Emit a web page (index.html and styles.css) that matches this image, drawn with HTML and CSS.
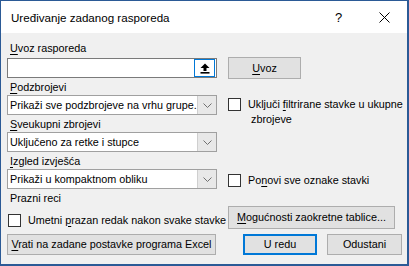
FILE: index.html
```html
<!DOCTYPE html>
<html lang="hr">
<head>
<meta charset="utf-8">
<title>Uređivanje zadanog rasporeda</title>
<link rel="stylesheet" href="styles.css">
</head>
<body>
<div class="window">
  <div class="titlebar">
    <span class="title">Uređivanje zadanog rasporeda</span>
    <span class="help">?</span>
    <svg class="close" width="11" height="11" viewBox="0 0 11 11"><path d="M0.5 0.5 L10.5 10.5 M10.5 0.5 L0.5 10.5" stroke="#000" stroke-width="1" fill="none"/></svg>
  </div>
  <div class="content">
    <div class="label"><u>U</u>voz rasporeda</div>
    <div class="import-row">
      <div class="input">
        <span class="upload">
          <svg width="10" height="11" viewBox="0 0 10 11"><path d="M5 0.5 L9.5 5 L6.5 5 L6.5 8 L3.5 8 L3.5 5 L0.5 5 Z" fill="#000"/><rect x="0.5" y="9" width="9" height="1.6" fill="#000"/></svg>
        </span>
      </div>
      <button class="btn btn-import"><u>U</u>voz</button>
    </div>
    <div class="grid">
      <div class="label"><u>P</u>odzbrojevi</div>
      <div class="combo c1"><span class="value">Prikaži sve podzbrojeve na vrhu grupe.</span><span class="arrow"><svg width="9" height="5" viewBox="0 0 9 5"><path d="M0.5 0.5 L4.5 4.5 L8.5 0.5" stroke="#707070" fill="none"/></svg></span></div>
      <div class="check check1"><span class="box"></span><span class="ctext">Uključi <u>f</u>iltrirane stavke u ukupne<br><span class="indent">zbrojeve</span></span></div>
      <div class="label l2"><u>S</u>veukupni zbrojevi</div>
      <div class="combo c2"><span class="value">Uključeno za retke i stupce</span><span class="arrow"><svg width="9" height="5" viewBox="0 0 9 5"><path d="M0.5 0.5 L4.5 4.5 L8.5 0.5" stroke="#707070" fill="none"/></svg></span></div>
      <div class="label l3"><u>I</u>zgled izvješća</div>
      <div class="combo c3"><span class="value">Prikaži u kompaktnom obliku</span><span class="arrow"><svg width="9" height="5" viewBox="0 0 9 5"><path d="M0.5 0.5 L4.5 4.5 L8.5 0.5" stroke="#707070" fill="none"/></svg></span></div>
      <div class="check check2"><span class="box"></span><span class="ctext">Po<u>n</u>ovi sve oznake stavki</span></div>
      <div class="label l4">Prazni reci</div>
      <div class="check check3"><span class="box"></span><span class="ctext">Umetni <u>p</u>razan redak nakon svake stavke</span></div>
      <button class="btn btn-options"><u>M</u>ogućnosti zaokretne tablice...</button>
      <button class="btn btn-reset"><u>V</u>rati na zadane postavke programa Excel</button>
      <div class="actions">
        <button class="btn btn-ok">U redu</button>
        <button class="btn btn-cancel">Odustani</button>
      </div>
    </div>
  </div>
</div>
</body>
</html>
```
FILE: styles.css
```css
* { box-sizing: border-box; }
html, body { margin: 0; padding: 0; }
body {
  width: 409px;
  height: 266px;
  overflow: hidden;
  font-family: "Liberation Sans", Arial, sans-serif;
  font-size: 10.8px;
  color: #000;
  background: #f0f0f0;
}
u { text-decoration: underline; text-underline-offset: 2px; }
.window {
  width: 409px;
  height: 266px;
  border: 1px solid #2b5a96;
  border-bottom-width: 2px;
  border-right-width: 2px;
  background: #f0f0f0;
  display: flex;
  flex-direction: column;
}
.titlebar {
  height: 32px;
  background: #fff;
  display: flex;
  align-items: center;
  padding: 0 0 0 10px;
  flex: none;
}
.title { font-size: 11.6px; flex: 1; padding-top: 1px; }
.help { width: 8px; margin-right: 36px; font-size: 13px; }
.close { margin-right: 17px; }
.content {
  padding: 8px 6px 0 6px;
}
.label {
  height: 15px;
  line-height: 15px;
  padding-left: 3px;
  white-space: nowrap;
}
.import-row {
  margin-top: 1px;
  height: 22px;
  display: flex;
  align-items: center;
}
.input {
  width: 210px;
  height: 20px;
  background: #fff;
  border: 1px solid #7a7a7a;
  display: flex;
  justify-content: flex-end;
  align-items: center;
  padding-right: 1px;
}
.upload {
  width: 21px;
  height: 18px;
  border: 1px solid #0078d7;
  background: #fff;
  display: flex;
  align-items: center;
  justify-content: center;
}
.btn {
  font-family: inherit;
  font-size: 10.8px;
  color: #000;
  background: #e1e1e1;
  border: 1px solid #adadad;
  padding: 0;
  margin: 0;
  line-height: 1;
  white-space: nowrap;
}
.btn-import {
  margin-left: 11px;
  width: 73px;
  height: 22px;
}
.grid {
  margin-top: 1px;
  display: grid;
  grid-template-columns: 210px 174px;
  column-gap: 11px;
  grid-template-rows: 15px 20px 17px 20px 17px 20px 17px 23px 26px;
}
.grid > .label { grid-column: 1; }
.l2 { align-self: end; }
.l3 { align-self: end; }
.l4 { align-self: end; height: 15px; }
.combo {
  grid-column: 1;
  height: 20px;
  background: #fff;
  border: 1px solid #a0a0a0;
  display: flex;
  align-items: center;
}
.c1 { grid-row: 2; }
.c2 { grid-row: 4; }
.c3 { grid-row: 6; }
.value {
  flex: 1;
  padding-left: 2px;
  white-space: nowrap;
  overflow: hidden;
}
.arrow {
  width: 19px;
  height: 18px;
  background: #e8e8e8;
  border-left: 1px solid #cfcfcf;
  display: flex;
  align-items: center;
  justify-content: center;
  flex: none;
}
.check {
  display: flex;
  align-items: flex-start;
  white-space: nowrap;
}
.box {
  width: 13px;
  height: 13px;
  border: 1px solid #333;
  background: #fff;
  flex: none;
}
.ctext { margin-left: 7px; line-height: 15px; margin-top: -1px; }
.indent { padding-left: 3px; }
.check1 {
  grid-column: 2;
  grid-row: 2 / span 3;
  margin-top: 3px;
}
.check2 {
  grid-column: 2;
  grid-row: 6;
  align-self: end;
  margin-bottom: 1px;
}
.check3 {
  grid-column: 1;
  grid-row: 8;
  align-self: center;
  margin-left: 1px;
  margin-top: 6px;
}
.btn-options {
  grid-column: 2;
  grid-row: 8;
  width: 167px;
  height: 23px;
}
.btn-reset {
  grid-column: 1;
  grid-row: 9;
  width: 209px;
  height: 21px;
  margin-top: 5px;
}
.actions {
  grid-column: 2;
  grid-row: 9;
  display: flex;
  justify-content: flex-end;
  gap: 10px;
  margin-top: 5px;
  height: 21px;
}
.btn-ok {
  width: 74px;
  height: 21px;
  border: 2px solid #0078d7;
}
.btn-cancel {
  width: 75px;
  height: 21px;
}
```
